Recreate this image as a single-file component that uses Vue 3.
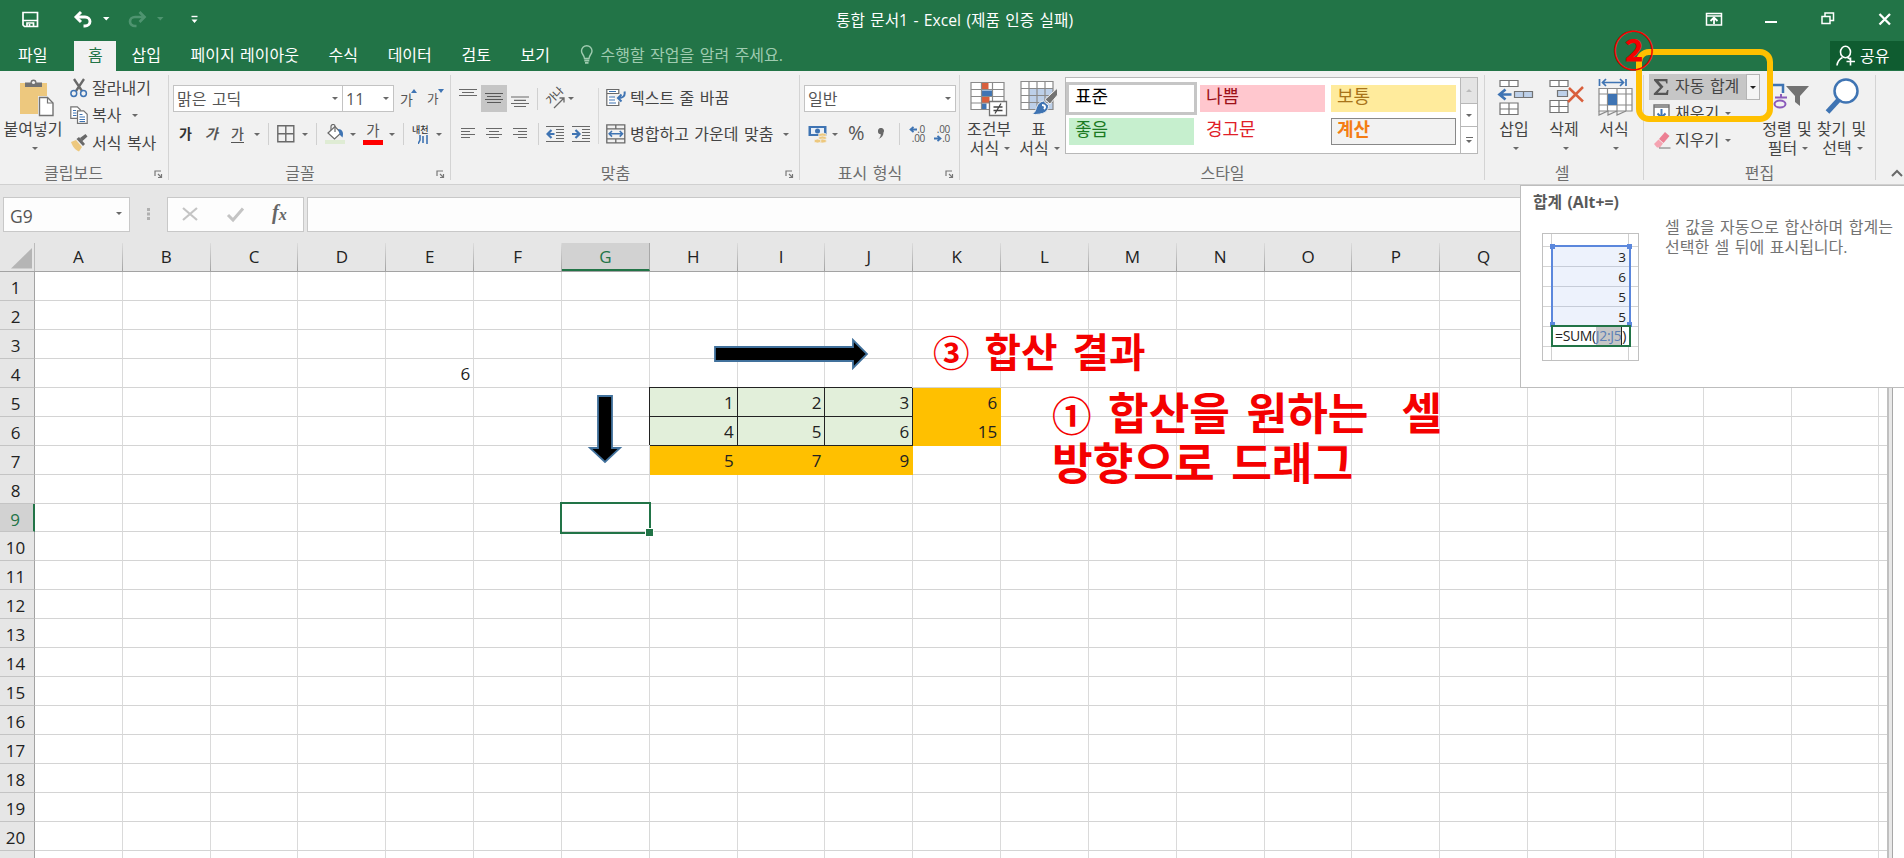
<script setup>
const cols = 'ABCDEFGHIJKLMNOPQRSTUV'.split('')
const rows = Array.from({ length: 21 }, (_, i) => i + 1)
const values = {
  E4: 6,
  H5: 1, I5: 2, J5: 3, K5: 6,
  H6: 4, I6: 5, J6: 6, K6: 15,
  H7: 5, I7: 7, J7: 9
}
const green = ['H5', 'I5', 'J5', 'H6', 'I6', 'J6']
const gold = ['K5', 'K6', 'H7', 'I7', 'J7']
const cellClass = (id) => ({ green: green.includes(id), gold: gold.includes(id) })
const styles = [
  ['표준', 'normal'], ['나쁨', 'bad'], ['보통', 'neutral'],
  ['좋음', 'good'], ['경고문', 'warn'], ['계산', 'calc']
]
const sample = [3, 6, 5, 5]
</script>

<template>
  <div class="app">
    <header class="title">
      <svg class="quick" width="210" height="41" viewBox="0 0 210 41">
        <g fill="none" stroke="#fff">
          <path d="M23 12.5h14.5v14H24.500l-1.500-1.500z" stroke-width="1.7" />
          <path d="M22.500 20.500h15" stroke-width="1.500" />
          <path d="M27 27v-4h6.500v4M29.500 24v3" stroke-width="1.7" />
          <path d="M77 17h8a5 4.500 0 0 1 0 9h-1.500" stroke-width="2.900" />
          <path d="M81 12l-5 5 5 5" stroke-width="2.900" />
        </g>
        <path d="M103 17h6.500l-3.250 3.500zM191.500 19.500h6l-3 3.500z" fill="#fff" />
        <path d="M191.500 16.500h6" stroke="#fff" stroke-width="1.400" />
        <g fill="none" stroke="#4f9470" stroke-width="2.700">
          <path d="M143 17h-8a5 4.500 0 0 0 0 9h1.500" /><path d="M139.500 12l5 5-5 5" />
        </g>
        <path d="M157 17h6.500l-3.250 3.500z" fill="#4f9470" />
      </svg>
      <span class="doc">통합 문서1 - Excel (제품 인증 실패)</span>
      <svg class="winbtns" width="204" height="41" viewBox="1700 0 204 41" fill="none" stroke="#fff">
        <path d="M1706.500 13.500h15v11.500h-15zM1706.500 16h15" stroke-width="1.500" />
        <path d="M1714 24v-5.500M1710.500 21l3.500-3.500 3.500 3.500" stroke-width="1.800" />
        <path d="M1765 22h12" stroke-width="2" />
        <path d="M1822 16.500h8v7h-8zM1825 16v-3h8.500v7.500h-3" stroke-width="1.500" />
        <path d="M1879.500 14l10.500 10.500M1890 14l-10.500 10.500" stroke-width="2.300" />
      </svg>
    </header>

    <nav class="tabs">
      <span class="tab file">파일</span>
      <span class="tab active">홈</span>
      <span class="tab">삽입</span>
      <span class="tab">페이지 레이아웃</span>
      <span class="tab">수식</span>
      <span class="tab">데이터</span>
      <span class="tab">검토</span>
      <span class="tab">보기</span>
      <span class="tell">
        <svg width="14" height="20" viewBox="0 0 14 20" fill="none" stroke="#9fcbb0" stroke-width="1.400">
          <path d="M4.500 13.500C4.500 10.500 1.500 9 1.500 6a5.200 5.200 0 0 1 10.500 0c0 3-3 4.500-3 7.500z" />
          <path d="M4.300 15.500h5M5 17.800h3.500" stroke-width="1.800" />
        </svg>
        수행할 작업을 알려 주세요.
      </span>
      <span class="share">
        <svg width="20" height="22" viewBox="0 0 20 22" fill="none" stroke="#fff" stroke-width="1.600">
          <ellipse cx="9.500" cy="7" rx="5" ry="5.800" />
          <path d="M1 20.500c.5-4 2.500-6.500 5.500-8M11.500 12.500l2.500 1.500M14.500 12.500v8M10.500 16.500h8.500" />
        </svg>
        공유
      </span>
    </nav>

    <section class="ribbon">
      <div class="group clip">
        <div class="body">
          <div class="big paste">
            <svg width="36" height="40" viewBox="0 0 36 40">
              <path d="M1 5h27v31H1z" fill="#edc87e" />
              <path d="M6 9V4.500h5.500a3 3 0 0 1 6 0H23V9z" fill="#737373" /><circle cx="14.500" cy="4.500" r="1.600" fill="#f1f1f1" />
              <path d="M19 18h10l6.500 6.500V39H19z" fill="#f1f1f1" />
              <path d="M20.500 19.500h8l5.500 5.500v12.500H20.500z" fill="#fff" stroke="#737373" stroke-width="1.400" />
              <path d="M28.500 19.500V25H34" fill="none" stroke="#737373" stroke-width="1.200" />
            </svg>
            <b>붙여넣기</b><i class="dn"></i>
          </div>
          <div class="list">
            <div class="sm">
              <svg width="18" height="20" viewBox="0 0 18 20" fill="none">
                <path d="M4 1l8 12M14 1L6 13" stroke="#696969" stroke-width="2.300" />
                <circle cx="3.800" cy="15.500" r="2.900" stroke="#3f74b3" stroke-width="1.500" /><circle cx="13.500" cy="15.500" r="2.900" stroke="#3f74b3" stroke-width="1.500" />
              </svg>잘라내기
            </div>
            <div class="sm">
              <svg width="18" height="20" viewBox="0 0 18 20" fill="none">
                <path d="M.8 1.800h6.500l3 3v8.500H.8z" fill="#fff" stroke="#737373" stroke-width="1.200" />
                <path d="M7.500 5.800h6.200l3.500 3.500v9H7.500z" fill="#fff" stroke="#737373" stroke-width="1.200" />
                <path d="M3 5.500h3M3 8h3.500M3 10.500h3.500M9.500 9.500h3M9.500 12h5.500M9.500 14.500h5.500M9.500 16.500h5.500" stroke="#3f74b3" />
              </svg>복사<i class="dn gap"></i>
            </div>
            <div class="sm">
              <svg width="18" height="20" viewBox="0 0 18 20">
                <path d="M1 9l5-2 6 7-3 4.500c-3-1-6-4-8-9.500z" fill="#edc87e" />
                <path d="M6.500 6L9 4l6 7-2 2zM10 5l5.500-4 2 2.500-5 4.500z" fill="#696969" />
              </svg>서식 복사
            </div>
          </div>
        </div>
        <footer>클립보드</footer><svg class="launch" width="9" height="9" viewBox="0 0 9 9"><path d="M1 6V1h6M4 4l3.500 3.500M7.500 4v3.500H4" fill="none" stroke="#777" stroke-width="1.200" /></svg>
      </div>

      <div class="group font">
        <div class="body col">
          <div class="fields">
            <span class="field">맑은 고딕<i class="dn"></i></span>
            <span class="field">11<i class="dn"></i></span>
            <span class="ga grow">가<svg width="6" height="4"><path d="M0 4L3 0l3 4z" fill="#3f74b3" /></svg></span>
            <span class="ga shrink">가<svg width="6" height="4"><path d="M0 0h6L3 4z" fill="#3f74b3" /></svg></span>
          </div>
          <div class="tools fonttools">
            <span class="g bold">가</span><span class="g ital">가</span><span class="g under">가</span><i class="dn"></i><u></u>
            <svg width="18" height="18" viewBox="0 0 18 18" fill="none" stroke="#696969" stroke-width="1.400"><path d="M.8.8h16v16H.8zM8.800.8v16M.8 8.800h16" /></svg>
            <i class="dn"></i><u></u>
            <svg width="20" height="20" viewBox="0 0 20 20">
              <path d="M0 16h20v4H0z" fill="#dfecd4" />
              <path d="M3 9l7-6.500 6 6.500-6.500 6z" fill="#fff" stroke="#696969" stroke-width="1.200" />
              <path d="M6 6V2.500a2 2 0 0 1 4 0V8" fill="none" stroke="#696969" stroke-width="1.200" />
              <path d="M13 5c4 0 6 3 4.500 8.500L15 11z" fill="#3f74b3" />
            </svg>
            <i class="dn"></i>
            <span class="fcolor">가</span><i class="dn"></i><u></u>
            <span class="hanja">내천<svg width="10" height="9" viewBox="0 0 10 9" fill="none" stroke="#3f74b3" stroke-width="1.600"><path d="M2 0v5L0 9M5 1v7M9 0v9" /></svg></span><i class="dn"></i>
          </div>
        </div>
        <footer>글꼴</footer><svg class="launch" width="9" height="9" viewBox="0 0 9 9"><path d="M1 6V1h6M4 4l3.500 3.500M7.500 4v3.500H4" fill="none" stroke="#777" stroke-width="1.200" /></svg>
      </div>

      <div class="group align">
        <div class="body">
          <div class="alignl">
            <div class="tools al1">
              <svg width="18" height="27" viewBox="0 0 18 27" stroke="#696969" stroke-width="1.200"><path d="M0 4.500h18M3 7.500h12M0 10.500h18" /></svg>
              <svg class="on" width="26" height="27" viewBox="0 0 26 27" stroke="#595959" stroke-width="1.200"><path d="M4 8.500h18M6 11.500h14M4 14.500h18M6 17.500h14" /></svg>
              <svg width="18" height="27" viewBox="0 0 18 27" stroke="#696969" stroke-width="1.200"><path d="M0 12h18M3 15.300h12M0 18.500h18M3 21.500h12" /></svg>
              <u></u>
              <svg class="orientbox" width="22" height="22" viewBox="0 0 22 22"><text x="0" y="0" transform="translate(5.500 17) rotate(-45)" class="orient">가나</text><path d="M9 20L19 10M14.500 10H19v4.500" fill="none" stroke="#696969" stroke-width="1.300" /></svg>
              <i class="dn"></i>
            </div>
            <div class="tools al2">
              <svg width="14" height="14" viewBox="0 0 14 14" stroke="#696969" stroke-width="1.200"><path d="M0 1.500h14M0 4.500h9M0 7.500h14M0 10.500h9" /></svg>
              <svg width="16" height="14" viewBox="0 0 16 14" stroke="#696969" stroke-width="1.200"><path d="M0 1.500h16M3 4.500h10M0 7.500h16M3 10.500h10" /></svg>
              <svg width="14" height="14" viewBox="0 0 14 14" stroke="#696969" stroke-width="1.200"><path d="M0 1.500h14M5 4.500h9M0 7.500h14M5 10.500h9" /></svg>
              <u></u>
              <svg width="18" height="18" viewBox="0 0 18 18" fill="none" stroke="#696969" stroke-width="1.200"><path d="M0 1.500h18M10 4.500h8M10 7.500h8M10 10.500h8M10 13.500h8M0 16.500h18" /><path d="M8.500 9H2M5.500 5L1.500 9l4 4" stroke="#3f74b3" stroke-width="2.200" /></svg>
              <svg width="18" height="18" viewBox="0 0 18 18" fill="none" stroke="#696969" stroke-width="1.200"><path d="M0 1.500h18M10 4.500h8M10 7.500h8M10 10.500h8M10 13.500h8M0 16.500h18" /><path d="M0 9h6.500M3.500 5l4 4-4 4" stroke="#3f74b3" stroke-width="2.200" /></svg>
            </div>
          </div>
          <u class="tall"></u>
          <div class="alignr">
            <div class="sm2">
              <svg width="20" height="20" viewBox="0 0 20 20" fill="none"><path d="M.8 1.500h12v4H.8zM.8 5.500v12h12v-4" fill="#fff" stroke="#696969" stroke-width="1.200" /><path d="M3 9h6M3 12h6M3 15h7M3 3.500h7" stroke="#3f74b3" stroke-width="1.200" /><path d="M18.500 3.500c1 5-2 6.500-6 6.500M15.500 6.500L12 10l3.500 3.500" stroke="#3f74b3" stroke-width="2" /></svg>
              텍스트 줄 바꿈
            </div>
            <div class="sm2">
              <svg width="20" height="20" viewBox="0 0 20 20" fill="none"><path d="M.8.8h18v18H.8zM.8 4.800h18M.8 14.800h18M9.800.8v4M9.800 14.800v4" stroke="#696969" stroke-width="1.300" /><path d="M3.500 9.800h12.500M6 7L3.200 9.800 6 12.600M13.700 7l2.800 2.800-2.800 2.800" stroke="#3f74b3" stroke-width="1.600" /></svg>
              병합하고 가운데 맞춤<i class="dn gap"></i>
            </div>
          </div>
        </div>
        <footer>맞춤</footer><svg class="launch" width="9" height="9" viewBox="0 0 9 9"><path d="M1 6V1h6M4 4l3.500 3.500M7.500 4v3.500H4" fill="none" stroke="#777" stroke-width="1.200" /></svg>
      </div>

      <div class="group number">
        <div class="body col">
          <div class="fields"><span class="field">일반<i class="dn"></i></span></div>
          <div class="tools numtools">
            <svg width="20" height="20" viewBox="0 0 20 20"><path d="M.5 2h18v10H.5z" fill="#3f74b3" /><path d="M3 4h13v6H3z" fill="#e9eff7" /><circle cx="9.500" cy="7" r="2.500" fill="#3f74b3" /><g fill="#edc87e" stroke="#f1f1f1" stroke-width=".8"><ellipse cx="14.500" cy="11" rx="4" ry="2" /><ellipse cx="14.500" cy="14" rx="4" ry="2" /><ellipse cx="14.500" cy="17" rx="4" ry="2" /><ellipse cx="9.500" cy="17" rx="3.500" ry="2" /></g></svg>
            <i class="dn"></i><span class="pct">%</span>
            <svg width="8" height="12" viewBox="0 0 8 12"><path d="M1 3a3 3 0 1 1 5.500 1.500C6.500 7.500 5 9.500 1.500 11 3 9.500 3.800 8 3.800 6.200A3 3 0 0 1 1 3z" fill="#696969" /></svg>
            <u></u>
            <span class="dec">
              <span><svg width="8" height="7" viewBox="0 0 8 7"><path d="M8 3.500H2M4.500.8L1.500 3.500l3 2.700" fill="none" stroke="#3f74b3" stroke-width="1.800" /></svg>.0</span>
              <span>.00</span>
            </span>
            <span class="dec">
              <span>.00</span>
              <span><svg width="8" height="7" viewBox="0 0 8 7"><path d="M0 3.500h6M3.500.8l3 2.700-3 2.700" fill="none" stroke="#3f74b3" stroke-width="1.800" /></svg>.0</span>
            </span>
          </div>
        </div>
        <footer>표시 형식</footer><svg class="launch" width="9" height="9" viewBox="0 0 9 9"><path d="M1 6V1h6M4 4l3.500 3.500M7.500 4v3.500H4" fill="none" stroke="#777" stroke-width="1.200" /></svg>
      </div>

      <div class="group style">
        <div class="body">
          <div class="big cond">
            <svg width="38" height="40" viewBox="0 0 38 40">
              <path d="M1 4.500h33v27H1z" fill="#fff" /><path d="M11.500 4.500h7v7h-7zM11.500 19h8v6h-8z" fill="#d95f3c" /><path d="M11.500 12.500h11v6h-11zM11.500 25.500h5v6h-5z" fill="#3f74b3" />
              <path d="M1 4.500h33v27H1zM1 11.500h33M1 18.500h33M1 25h33M11.500 4.500v27M22.500 4.500v27" fill="none" stroke="#8a8a8a" stroke-width="1.200" />
              <path d="M19.500 23.500h17v14h-17z" fill="#fff" stroke="#737373" stroke-width="1.300" /><path d="M23.500 29h9M23.500 32.500h9M31 25.500l-6 10" stroke="#444" stroke-width="1.300" />
            </svg>
            <b>조건부</b><b class="l2">서식<i class="dn"></i></b>
          </div>
          <div class="big tbl">
            <svg width="38" height="40" viewBox="0 0 38 40">
              <path d="M1 3.500h32v28H1z" fill="#fff" /><path d="M9 10.500h24v21H9z" fill="#bdd0e9" />
              <path d="M1 3.500h32v28H1zM1 10.500h32M1 17.500h32M1 24.500h32M9 3.500v28M17 3.500v28M25 3.500v28" fill="none" stroke="#8a8a8a" stroke-width="1.200" />
              <path d="M37.500 10v7L30 26l-5-4.500z" fill="#737373" stroke="#f1f1f1" /><path d="M23.500 23l5 4.500c0 6-4 9.500-17.500 9 4-1.500 4.500-4 5.500-7 1-3.500 3.500-6 7-6.500z" fill="#3f74b3" stroke="#f1f1f1" /><path d="M22 27c3 0 4 2 2 4" fill="none" stroke="#fff" stroke-width="2" />
            </svg>
            <b>표</b><b class="l2">서식<i class="dn"></i></b>
          </div>
          <div class="gallery">
            <div class="swatches">
              <span v-for="s in styles" :key="s[1]" :class="['sw', s[1]]">{{ s[0] }}</span>
            </div>
            <div class="scroll">
              <span class="off"><i class="up"></i></span><span><i class="dn"></i></span><span class="more"><i class="dn"></i></span>
            </div>
          </div>
        </div>
        <footer>스타일</footer>
      </div>

      <div class="group cells">
        <div class="body">
          <div class="big">
            <svg width="37" height="40" viewBox="0 0 37 40" fill="none" stroke="#737373" stroke-width="1.200">
              <path d="M3 2.500h18v6H3zM12 2.500v6M3 25h18v11.500H3zM12 25v11.500M3 31h18" fill="#fff" /><path d="M17.500 13.500h18v6h-18zM26.500 13.500v6" fill="#bdd0e9" />
              <path d="M14.500 16.500H3M8.500 11.500l-6 5 6 5" stroke="#3f74b3" stroke-width="2.700" />
            </svg><b>삽입</b><i class="dn"></i>
          </div>
          <div class="big">
            <svg width="37" height="40" viewBox="0 0 37 40" fill="none" stroke="#737373" stroke-width="1.200">
              <path d="M3 2.500h18v6H3zM12 2.500v6M3 22.500h18V34.500H3zM12 22.500v12M3 28.500h18" fill="#fff" /><path d="M10.500 12.500h10v6h-10z" fill="#bdd0e9" />
              <path d="M22 10l14 13.500M36 9L21 24" stroke="#d95f3c" stroke-width="2.500" />
            </svg><b>삭제</b><i class="dn"></i>
          </div>
          <div class="big">
            <svg width="37" height="40" viewBox="0 0 37 40" fill="none" stroke="#8a8a8a" stroke-width="1.200">
              <path d="M2 10.500h33V33H2z" fill="#fff" /><path d="M2 16h33M2 27h33M10.500 10.500V33M20 10.500V33M29 10.500V33M2 33v4l9-4v4l9-4v4l9-4" /><path d="M11 16h9v11h-9z" fill="#3f74b3" stroke="none" />
              <path d="M2.500 1v7M29 1v7M5 4.500h22M9 1L5.500 4.500 9 8M23 1l3.500 3.500L23 8" stroke="#3f74b3" stroke-width="1.700" />
            </svg><b>서식</b><i class="dn"></i>
          </div>
        </div>
        <footer>셀</footer>
      </div>

      <div class="group edit">
        <div class="body">
          <div class="elist">
            <div class="autosum">
              <svg width="17" height="18" viewBox="0 0 17 18"><path d="M1 1h13.500v4.500h-1.200L12.500 3.200H5.500l5 5.600-5.700 5.900H13l1.200-2.700h1.300L15 17H.8v-1.500L7 9.200 1 2.500z" fill="#555" /></svg>
              <span>자동 합계</span><em><i class="dn dark"></i></em>
            </div>
            <div class="sm">
              <svg width="18" height="18" viewBox="0 0 18 18" fill="none"><path d="M1 1h15v16H1zM1 3h15" fill="#fff" stroke="#737373" stroke-width="1.400" /><path d="M8.500 5v8M4.500 9.500l4 4 4-4" stroke="#3f74b3" stroke-width="2" /></svg>채우기<i class="dn gap"></i>
            </div>
            <div class="sm last">
              <svg width="18" height="18" viewBox="0 0 18 18"><path d="M6 8l6-7 4.500 4-6 7z" fill="#ec7f93" /><path d="M1 13l4.500-4.500L10 12.500 7 16.500H4z" fill="#f5a3b1" /><path d="M6 17h11.500" stroke="#737373" /></svg>지우기<i class="dn gap"></i>
            </div>
          </div>
          <div class="big sort">
            <svg width="44" height="40" viewBox="0 0 44 40" fill="none">
              <path d="M6 7h12v8" stroke="#3f74b3" stroke-width="2.500" /><path d="M10 19.500h12" stroke="#8b5bbb" stroke-width="2" /><path d="M16 16v3" stroke="#8b5bbb" stroke-width="2" /><ellipse cx="15" cy="26" rx="5.500" ry="3.500" stroke="#8b5bbb" stroke-width="2" />
              <path d="M21 8h23l-9 10v10l-5-4v-6z" fill="#737373" />
            </svg><b>정렬 및</b><b class="l2">필터<i class="dn"></i></b>
          </div>
          <div class="big find">
            <svg width="38" height="40" viewBox="0 0 38 40" fill="none" stroke="#3f74b3"><path d="M15 21.500L3.500 34" stroke-width="5" /><circle cx="22" cy="13" r="11.500" fill="#fff" stroke-width="2.500" /></svg>
            <b>찾기 및</b><b class="l2">선택<i class="dn"></i></b>
          </div>
        </div>
        <footer>편집</footer>
      </div>
      <svg class="collapse" width="12" height="8" viewBox="0 0 12 8"><path d="M1 7l5-5 5 5" fill="none" stroke="#696969" stroke-width="2" /></svg>
    </section>

    <section class="formula">
      <div class="name">G9<i class="dn"></i></div>
      <svg class="grip" width="4" height="14"><path d="M0 1h3v3H0zM0 5.500h3v3H0zM0 10h3v3H0z" fill="#b0b0b0" /></svg>
      <div class="fx">
        <svg width="134" height="32" viewBox="0 0 134 32" fill="none">
          <path d="M15 10l14 12M29 10L15 22" stroke="#c4c4c4" stroke-width="2.200" /><path d="M60 17l5 5L75 10.500" stroke="#c4c4c4" stroke-width="3" />
          <text x="104" y="20.500" class="fxt">f<tspan dy="1" font-size="16">x</tspan></text>
        </svg>
      </div>
      <div class="input"></div>
    </section>

    <section class="sheet">
      <div class="grid">
        <div class="hrow">
          <span class="corner"><svg width="21" height="21"><path d="M21 0v20.500H0z" fill="#b5b5b5" /></svg></span>
          <span v-for="c in cols" :key="c" :class="['ch', { sel: c === 'G' }]">{{ c < 'R' ? c : '' }}</span>
        </div>
        <div v-for="r in rows" :key="r" class="row">
          <span :class="['rh', { sel: r === 9 }]">{{ r < 21 ? r : '' }}</span>
          <span v-for="c in cols" :key="c" class="cell" :class="cellClass(c + r)">{{ values[c + r] }}</span>
        </div>
      </div>
      <div class="edge"></div>
      <div class="active-cell"></div>
      <svg class="arrow right" width="158" height="36" viewBox="0 0 158 36"><path d="M2 11h138V4l14 14-14 14v-7H2z" stroke="#41719c" stroke-width="1.800" /></svg>
      <svg class="arrow down" width="36" height="72" viewBox="0 0 36 72"><path d="M11 3h14v52h8L18 69 3 55h8z" stroke="#41719c" stroke-width="1.800" /></svg>
      <p class="note n3"><span>③</span> 합산 결과</p>
      <p class="note n1"><span>①</span> 합산을 원하는&nbsp; 셀<br>방향으로 드래그</p>
    </section>

    <aside class="tip">
      <h4>합계 (Alt+=)</h4>
      <div class="tipbody">
        <div class="mini">
          <div class="range">
            <span v-for="(n, i) in sample" :key="i">{{ n }}</span>
            <s class="tl"></s><s class="tr"></s><s class="bl"></s><s class="br"></s>
          </div>
          <div class="sum">=SUM(<mark>J2:J5</mark>)</div>
        </div>
        <p>셀 값을 자동으로 합산하며 합계는<br>선택한 셀 뒤에 표시됩니다.</p>
      </div>
    </aside>
    <div class="ring"></div>
    <span class="note n2">②</span>
  </div>
</template>

<style>
body { margin: 0; overflow: hidden; }
</style>

<style scoped>
* { box-sizing: border-box; }
.app { position: relative; width: 1904px; height: 858px; overflow: hidden; background: #e6e6e6; font: 16px/20px "Open Sans", "Noto Sans CJK KR", sans-serif; word-spacing: 1.3px; color: #444; display: flex; flex-direction: column; white-space: nowrap; }
svg { display: block; flex: none; }
.title { height: 41px; background: #227447; display: flex; justify-content: space-between; color: #fff; flex: none; }
.doc { line-height: 40px; font-size: 15.700px; margin-right: 1px; }
.tabs { height: 30px; background: #227447; color: #fff; display: flex; line-height: 28px; flex: none; }
.tab { margin-right: 29.600px; }
.file { margin: 0 27px 0 18px; }
.active { background: #f1f1f1; color: #227447; width: 42px; text-align: center; margin-right: 15px; }
.tell { color: #9fcbb0; display: flex; gap: 7px; align-items: center; line-height: 28px; height: 28px; }
.share { margin-left: auto; width: 74px; height: 29px; background: #0f5c30; display: flex; align-items: center; padding-left: 6px; gap: 4px; }
.ribbon { height: 114px; background: #f1f1f1; border-bottom: 1px solid #d0d0d0; display: flex; flex: none; position: relative; }
.group { position: relative; flex: none; height: 113px; }
.group::after { content: ""; position: absolute; right: 0; top: 4px; width: 1px; height: 105px; background: #d4d4d4; }
.body { height: 91px; display: flex; }
.col { flex-direction: column; }
footer { height: 22px; line-height: 22px; text-align: center; color: #6d6d6d; }
.launch { position: absolute; right: 6px; top: 99px; }
.dn, .up { width: 0; height: 0; border: 3.500px solid transparent; border-top: 3.500px solid #696969; border-bottom: 0; flex: none; display: block; }
.up { border-bottom: 3.500px solid #bbb; border-top: 0; }
.dark { border-top-color: #222; }
.gap { margin-left: 11px; }
.big { display: flex; flex-direction: column; align-items: center; padding-top: 7px; }
.big b { font-weight: 400; height: 20px; margin-top: 1px; }
.big > .dn { margin: 8px 0 0 4px; }
.big .l2 { display: flex; align-items: center; gap: 5px; margin-top: -1px; padding-left: 2px; height: 20px; }
.sm { height: 27.500px; display: flex; align-items: center; }
.sm svg { margin-right: 4px; }
.clip { width: 169px; }
.clip footer { padding-right: 22px; }
.paste { width: 66px; margin-right: 4px; }
.paste svg { margin-left: 7px; }
.list { padding-top: 3px; }
.font { width: 282px; }
.font footer { padding-right: 20px; }
.fields { display: flex; padding: 14px 0 0 4px; height: 41px; }
.field { height: 27px; border: 1px solid #c3c3c3; background: #fff; display: flex; align-items: center; justify-content: space-between; padding: 0 4px 0 3px; color: #555; }
.font .field:first-child { width: 170px; }
.font .field:nth-child(2) { width: 52px; margin-left: -1px; }
.ga { position: relative; font-size: 14px; line-height: 30px; margin-left: 6px; width: 21px; color: #555; }
.shrink { font-size: 12.500px; }
.ga svg { position: absolute; left: 11px; top: 4px; }
.tools { display: grid; align-items: center; justify-items: start; height: 44px; color: #555; }
.tools u { width: 1px; height: 22px; background: #d0d0d0; }
.fonttools { grid-template-columns: 26px 26px 23px 14px 9px 25px 14px 9px 25px 13px 26px 14px 9px 24px 10px; padding-left: 10px; }
.g { font-size: 14px; }
.bold { font-weight: 700; color: #333; }
.ital { font-style: italic; font-weight: 700; }
.under { border-bottom: 1.500px solid #555; line-height: 17px; font-weight: 500; }
.fcolor { width: 20px; height: 21px; font-size: 14.500px; line-height: 13px; border-bottom: 5px solid red; text-align: center; }
.hanja { font-size: 9px; line-height: 10px; font-weight: 500; color: #333; }
.hanja svg { margin-left: 6px; }
.align { width: 349px; }
.align footer { padding-right: 20px; }
.alignl { width: 147px; }
.al1 { height: 27px; margin-top: 14px; grid-template-columns: 22px 30px 26px 8px 23px 10px; padding-left: 8px; }
.al2 { height: 44px; grid-template-columns: 25px 27px 25px 8px 26px 20px; padding-left: 10px; }
.on { background: #c6c6c6; }
.orientbox { overflow: visible; }
.orient { font-size: 10.500px; font-weight: 500; fill: #555; }
.tall { width: 1px; height: 56px; background: #d8d8d8; margin-top: 17px; }
.alignr { padding: 13px 0 0 7px; }
.sm2 { display: flex; align-items: center; height: 28px; margin-bottom: 8px; gap: 4px; }
.sm2 .gap { margin-left: 6px; }
.number { width: 160px; }
.number .field { width: 152px; }
.number footer { padding-right: 20px; }
.numtools { grid-template-columns: 24px 16px 29px 22px 10px 25px 20px; padding-left: 8px; }
.pct { font-size: 20px; line-height: 20px; height: 22px; }
.dec { font-size: 10px; line-height: 9.500px; width: 16px; font-weight: 500; display: flex; flex-direction: column; align-items: flex-end; letter-spacing: -.3px; }
.dec span { display: flex; align-items: center; height: 9.500px; }
.style { width: 525px; }
.cond { width: 50px; margin-left: 4px; }
.tbl { width: 49px; margin-right: 2px; }
.gallery { width: 413px; height: 77px; border: 1px solid #b8b8b8; background: #fff; margin-top: 6px; display: flex; }
.swatches { display: grid; grid-template-columns: 125px 125px 125px; grid-template-rows: 27px 27px; gap: 6px; padding: 7px 3px; width: 394px; align-content: start; }
.sw { font-size: 18px; line-height: 23px; padding-left: 6px; word-spacing: 0; }
.normal { color: #000; outline: 3px solid #c6c6c6; }
.bad { background: #ffc7ce; color: #9c1018; }
.neutral { background: #ffeb9c; color: #a8741a; }
.good { background: #c6efce; color: #1b7a22; }
.warn { color: #e02028; }
.calc { background: #f2f2f2; color: #f47d14; font-weight: 700; border: 1.500px solid #888; line-height: 20px; padding-left: 5px; }
.scroll { width: 17px; border-left: 1px solid #b8b8b8; display: grid; grid-template-rows: 26px 23px 26px; }
.scroll span { display: flex; align-items: center; justify-content: center; border-bottom: 1px solid #b8b8b8; }
.scroll .off { background: #e4e4e4; }
.scroll .more { border-bottom: 0; flex-direction: column; gap: 2px; }
.more::before { content: ""; width: 7px; height: 1px; background: #696969; }
.cells { width: 159px; padding-left: 6px; }
.cells .big { width: 50px; padding-right: 4px; }
.cells .big svg { margin-left: 2px; }
.cells footer { padding-right: 11px; }
.edit { width: 232px; }
.edit footer { padding-right: 1px; }
.elist { width: 117px; padding: 3px 0 0 5px; }
.autosum { width: 111px; height: 26px; background: #c6c6c6; display: flex; align-items: center; padding-left: 4px; }
.autosum span { margin-left: 5px; line-height: 25px; height: 26px; }
.autosum em { margin-left: auto; width: 14px; height: 26px; background: #f5f5f5; border: 1px solid #b5b5b5; display: flex; align-items: center; justify-content: center; }
.edit .sm { padding-left: 4px; height: 26px; }
.edit .last { margin-top: 1px; }
.edit .sm svg { margin-right: 4px; }
.edit .sm .gap { margin-left: 6px; }
.sort { width: 52px; }
.find { width: 57px; }
.find svg { margin-left: 2px; }
.collapse { position: absolute; left: 1891px; top: 98px; }
.formula { display: flex; height: 58px; padding: 12px 0 0 3px; flex: none; }
.name { width: 127px; height: 35px; background: #fdfdfd; border: 1px solid #c8c8c8; display: flex; justify-content: space-between; align-items: center; padding: 3px 7px 0 6px; font-size: 17.500px; color: #555; }
.name .dn { margin-top: -6px; }
.grip { margin: 10px 0 0 17px; }
.fx { width: 137px; height: 35px; background: #fdfdfd; border: 1px solid #c8c8c8; margin-left: 16px; }
.fxt { font: italic bold 20px "Liberation Serif", serif; fill: #666; }
.input { flex: 1; height: 35px; background: #fdfdfd; border: 1px solid #c8c8c8; margin-left: 3px; }
.sheet { position: relative; flex: 1; display: flex; background: #fff; overflow: hidden; }
.grid { width: 1887px; overflow: hidden; font-size: 17px; word-spacing: 0; color: #222; }
.hrow { display: flex; height: 29.200px; background: #e6e6e6; border-bottom: 1.500px solid #a3a3a3; }
.corner { width: 35px; flex: none; padding: 5px 0 0 11px; border-right: 1px solid #bbb; }
.ch { width: 87.830px; flex: none; text-align: center; line-height: 28px; border-right: 1px solid; border-image: linear-gradient(#dedede, #a0a0a0) 1; }
.ch.sel { background: #d2d2d2; color: #227447; border-bottom: 2px solid #227447; border-image: none; border-right: 1px solid #a8a8a8; }
.row { display: flex; height: 28.930px; }
.rh { width: 35px; flex: none; text-align: center; padding-right: 3px; line-height: 31px; height: 28.930px; background: #e6e6e6; border-right: 1.500px solid #a3a3a3; border-bottom: 1px solid #c4c4c4; }
.rh.sel { background: #d2d2d2; color: #227447; border-right: 2px solid #227447; }
.cell { width: 87.830px; flex: none; height: 28.930px; line-height: 30px; text-align: right; padding-right: 3px; border-right: 1px solid #dadada; border-bottom: 1px solid #d4d4d4; }
.green { background: #e2efda; border-color: #222; box-shadow: -1px -1px 0 #222; }
.gold { background: #ffc000; border-color: #ffc000; }
.edge { width: 6px; background: #e8e8e8; border-left: 2px solid #c0c0c0; border-right: 1px solid #a8a8a8; flex: none; }
.active-cell { position: absolute; left: 560px; top: 259px; width: 91px; height: 32px; border: 2px solid #227447; }
.active-cell::after { content: ""; position: absolute; right: -5px; bottom: -5px; width: 7px; height: 7px; background: #227447; border: 1px solid #fff; }
.arrow { position: absolute; fill: #000; }
.right { left: 713px; top: 93px; }
.down { left: 587px; top: 150px; }
.note { position: absolute; margin: 0; color: #f40000; font-family: "Noto Sans CJK KR", sans-serif; font-weight: 700; }
.n3 { left: 933px; top: 82px; font-size: 39.700px; line-height: 50px; word-spacing: 6px; }
.n3 span { font-size: 36.500px; line-height: 0; }
.n1 { left: 1052px; top: 143px; font-size: 44.200px; line-height: 50px; word-spacing: 6.500px; }
.n1 span { font-size: 39.500px; line-height: 0; vertical-align: -1px; }
.n2 { left: 1613px; top: 18px; font-size: 41px; line-height: 60px; }
.tip { position: absolute; left: 1520px; top: 185px; width: 386px; height: 203px; background: #fff; border: 1px solid #bdbdbd; padding: 6px 0 0 12px; color: #737373; }
.tip h4 { margin: 0; font-size: 15.800px; line-height: 21px; color: #595959; }
.tipbody { display: flex; }
.mini { width: 97px; height: 128px; margin: 20px 26px 0 9px; border: 1px solid #c0c0c0; padding: 11px 0 0 8px; font-size: 13.500px; color: #222; background: linear-gradient(90deg, transparent 8px, #d0d0d0 8px 9px, transparent 9px 85px, #d0d0d0 85px 86px, transparent 86px), repeating-linear-gradient(transparent 0 12px, #d4d4d4 12px 13px, transparent 13px 20px) #fff; }
.range { position: relative; width: 80px; height: 82px; border: 2px solid #5b87dc; background: #edf2fc; display: flex; flex-direction: column; }
.range span { height: 20px; flex: none; line-height: 20px; text-align: right; padding-right: 3px; border-bottom: 1px solid #c6ccd8; }
.range s { position: absolute; width: 5px; height: 5px; background: #5b87dc; }
.range span:nth-child(4) { height: 18px; border-bottom: 0; }
.tl { left: -3px; top: -3px; } .tr { right: -3px; top: -3px; } .bl { left: -3px; bottom: -2px; } .br { right: -3px; bottom: -2px; }
.sum { width: 80px; height: 22px; margin-top: -2px; border: 2px solid #227447; position: relative; background: #fff; line-height: 18px; font-size: 14px; padding-left: 2px; letter-spacing: -.35px; }
.sum mark { background: #c6c6c6; color: #5b7fb5; border-right: 1px solid #222; display: inline-block; height: 18px; }
.tipbody p { margin: 4px 0 0; line-height: 20px; }
.ring { position: absolute; left: 1636px; top: 49px; width: 137px; height: 73px; border: 6px solid #ffc000; border-radius: 13px; }
</style>
